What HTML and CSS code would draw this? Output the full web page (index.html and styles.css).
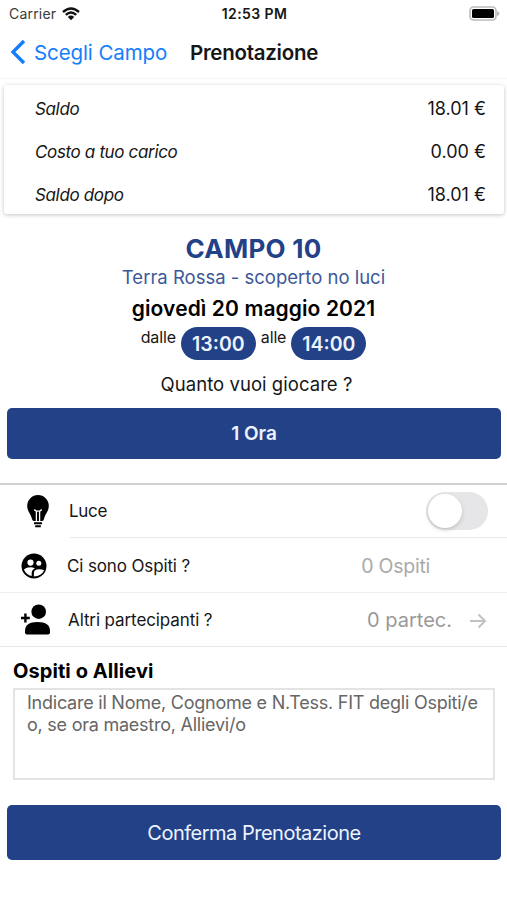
FILE: index.html
```html
<!DOCTYPE html>
<html lang="it">
<head>
<meta charset="utf-8">
<title>Prenotazione</title>
<link rel="stylesheet" href="styles.css">
</head>
<body>
<div class="status">
  <div class="carrier"><span class="carrier-name">Carrier</span>
    <svg class="wifi" viewBox="0 0 18 14"><path d="M1 5Q9-2 17 5M3.8 7.8Q9 3.2 14.2 7.8"/><path class="solid" d="M5.8 10Q9 7.2 12.2 10L9 13.3Z"/></svg>
  </div>
  <span class="clock">12:53 PM</span>
  <svg class="battery" viewBox="0 0 31 15"><rect class="shell" x="1" y="1" width="26" height="13" rx="3.5"/><rect x="3" y="3" width="22" height="9" rx="1.5"/><path class="tip" d="M28 5q2.5 1 2.500 2.500t-2.500 2.500z"/></svg>
</div>
<header class="nav">
  <svg class="back" viewBox="0 0 16 26"><path d="M14 2L3 13L14 24"/></svg>
  <span class="back-label">Scegli Campo</span>
  <h1 class="title">Prenotazione</h1>
</header>
<section class="card">
  <div class="line"><em>Saldo</em><span>18.01 €</span></div>
  <div class="line"><em>Costo a tuo carico</em><span>0.00 €</span></div>
  <div class="line"><em>Saldo dopo</em><span>18.01 €</span></div>
</section>
<section class="summary">
  <h2 class="court">CAMPO 10</h2>
  <div class="surface">Terra Rossa - scoperto no luci</div>
  <div class="date">giovedì 20 maggio 2021</div>
  <div class="times"><span class="word">dalle</span><b class="pill">13:00</b><span class="word">alle</span><b class="pill">14:00</b></div>
  <div class="question">Quanto vuoi giocare ?</div>
</section>
<button class="btn hour"><span>1 Ora</span></button>
<section class="options">
  <div class="row light">
    <svg class="bulb" viewBox="0 0 22 33"><path d="M11 0a10.800 10.800 0 0 1 10.800 10.800c0 5.500-3.500 7.500-4.800 13.200q-.3 2-2 2H7q-1.700 0-2-2C3.700 18.300.2 16.300.2 10.800A10.800 10.800 0 0 1 11 0Z"/><path class="cut" d="M7.200 14.600l2.200 1.600V26M14.800 14.600l-2.200 1.600V26M9.400 16.200h3.200"/><path class="base" d="M7 28.200h8M8.200 31.300h5.600"/></svg>
    <span class="name">Luce</span>
    <span class="switch"><i class="knob"></i></span>
  </div>
  <div class="row guests">
    <svg class="group" viewBox="0 0 26 26"><circle cx="13" cy="13" r="12.500"/><g class="holes"><circle cx="9.500" cy="9.600" r="3.100"/><circle cx="17.800" cy="10.300" r="2.500"/><path d="M2.900 16.500Q5.500 14.200 9.600 14.300q2.400 0 4.400 1.100-3.300 1.400-3.300 4.200v3.500Q5 21.800 2.900 16.500Z"/><path d="M12.900 23.400v-3.500q0-3.500 5.100-3.700 3.200 0 5.200 1Q20.500 23 12.900 23.400Z"/></g></svg>
    <span class="name">Ci sono Ospiti ?</span>
    <span class="value">0 Ospiti</span>
  </div>
  <div class="row people">
    <svg class="add" viewBox="0 0 30 31"><circle cx="17.700" cy="7.700" r="7.300"/><path d="M4 27Q4 18 16.500 18T29 27v1.500q0 2-2 2H6q-2 0-2-2Z"/><path class="plus" d="M0 14h8.800M4.400 9.600v8.800"/></svg>
    <span class="name">Altri partecipanti ?</span>
    <span class="value">0 partec.</span>
    <svg class="arrow" viewBox="0 0 18 16"><path d="M1 8h15M9.500 1.500L16 8l-6.500 6.500"/></svg>
  </div>
</section>
<section class="notes">
  <h3 class="notes-title">Ospiti o Allievi</h3>
  <div class="box"><div>Indicare il Nome, Cognome e N.Tess. FIT degli Ospiti/e</div><div>o, se ora maestro, Allievi/o</div></div>
</section>
<button class="btn confirm"><span>Conferma Prenotazione</span></button>
</body>
</html>
```
FILE: styles.css
```css
* { box-sizing: border-box; }
body { margin: 0; width: 507px; height: 900px; overflow: hidden; background: #fff; color: #161616; font-family: Inter, sans-serif; white-space: nowrap; }
h1, h2, h3 { margin: 0; }
svg { display: block; flex: none; }

.status { height: 27px; display: grid; grid-template-columns: 1fr auto 1fr; align-items: center; padding: 0 7px 0 9px; font-size: 14px; }
.carrier { display: flex; align-items: center; gap: 6px; color: #3a3a3a; }
.carrier-name { letter-spacing: .2px; }
.wifi { width: 18px; height: 14px; fill: none; stroke: #111; stroke-width: 2.4; }
.wifi .solid { fill: #111; stroke: none; }
.clock { font-weight: 600; font-size: 14px; letter-spacing: .4px; }
.battery { width: 31px; height: 15px; justify-self: end; }
.shell { fill: #fff; stroke: #bbb; stroke-width: 1.6; }
.tip { fill: #bbb; }

.nav { height: 52px; display: flex; align-items: center; padding: 0 0 1px 10px; border-bottom: 1px solid #f6f6f6; }
.back { width: 16px; height: 26px; fill: none; stroke: #157efb; stroke-width: 3.4; }
.back-label { margin-left: 8px; width: 156px; font-size: 20.500px; letter-spacing: -.1px; color: #157efb; }
.title { font-size: 20.500px; font-weight: 600; letter-spacing: -.27px; }

.card { margin: 6px 3px 0 4px; height: 129px; padding: 2px 18px 0 31px; border-radius: 3px; box-shadow: 0 1px 4px rgba(0,0,0,.24); }
.line { height: 43px; display: flex; align-items: center; justify-content: space-between; font-size: 18px; }
.line em { font-size: 17px; letter-spacing: -.35px; }

.summary { height: 194px; display: flex; flex-direction: column; align-items: center; padding-top: 19px; }
.court { height: 32px; line-height: 32px; font-size: 26px; letter-spacing: .25px; color: #234187; }
.surface { height: 26px; line-height: 24px; font-size: 18.500px; color: #3d5897; }
.date { height: 34px; line-height: 36px; font-size: 21px; letter-spacing: .1px; font-weight: 600; color: #000; }
.times { height: 38px; display: flex; }
.word { font-size: 16px; line-height: 24px; letter-spacing: -.15px; }
.pill { width: 75px; height: 33px; margin: 2px 5px 0; border-radius: 17px; background: #234187; color: #edf3ff; text-align: center; font-size: 19.500px; line-height: 34px; font-weight: 600; }
.pill:last-child { margin-right: 0; }
.question { height: 38px; padding-left: 6px; line-height: 42px; font-size: 18.500px; letter-spacing: .05px; }

.btn { display: flex; align-items: center; justify-content: center; width: 494px; margin: 0 6px 0 7px; padding: 0; border: 0; border-radius: 5px; background: #234187; color: #edf3ff; font: 19px Inter, sans-serif; }
.hour { height: 51px; font-weight: 600; }

.options { margin-top: 24px; border-top: 2px solid #d0d0d0; }
.row { display: flex; align-items: center; font-size: 17px; }
.light { height: 53px; padding: 0 0 1px 27px; background: linear-gradient(#e9e9e9, #e9e9e9) 70px 100% / 437px 1px no-repeat; }
.bulb { width: 22px; height: 33px; }
.cut { fill: none; stroke: #fff; stroke-width: 1.3; }
.base { stroke: #000; stroke-width: 1.9; }
.light .name { margin-left: 20px; letter-spacing: -.3px; }
.switch { margin: 0 19px 0 auto; width: 62px; height: 38px; padding: 2px; border-radius: 19px; background: #e6e6e8; }
.knob { display: block; width: 34px; height: 34px; border-radius: 50%; background: #fff; box-shadow: 0 2px 4px rgba(0,0,0,.16); }
.guests { height: 55px; padding: 1px 0 0 21px; border-bottom: 1px solid #efefef; }
.group { width: 26px; height: 26px; }
.holes { fill: #fff; }
.guests .name { margin-left: 20px; letter-spacing: -.13px; }
.value { margin-left: auto; font-size: 19.500px; color: #aaa; }
.guests .value { margin-right: 77px; letter-spacing: -.25px; }
.people { height: 54px; padding-left: 21px; border-bottom: 1px solid #e7e7e7; }
.add { width: 30px; height: 31px; }
.plus { stroke: #000; stroke-width: 2.4; }
.people .name { margin-left: 17px; letter-spacing: -.1px; }
.people .value { font-size: 20px; color: #999; }
.arrow { width: 18px; height: 16px; margin: 2px 20px 0 17px; fill: none; stroke: #c2c2c2; stroke-width: 2; }

.notes { padding: 0 12px 0 13px; }
.notes-title { height: 41px; line-height: 48px; font-size: 20px; letter-spacing: .08px; font-weight: 700; color: #000; }
.box { height: 92px; padding: 2px 12px; border: 2px solid #e3e3e3; color: #666; font-size: 18px; line-height: 22px; letter-spacing: -.24px; }
.confirm { height: 55px; margin-top: 25px; font-size: 20px; letter-spacing: -.5px; }
```
